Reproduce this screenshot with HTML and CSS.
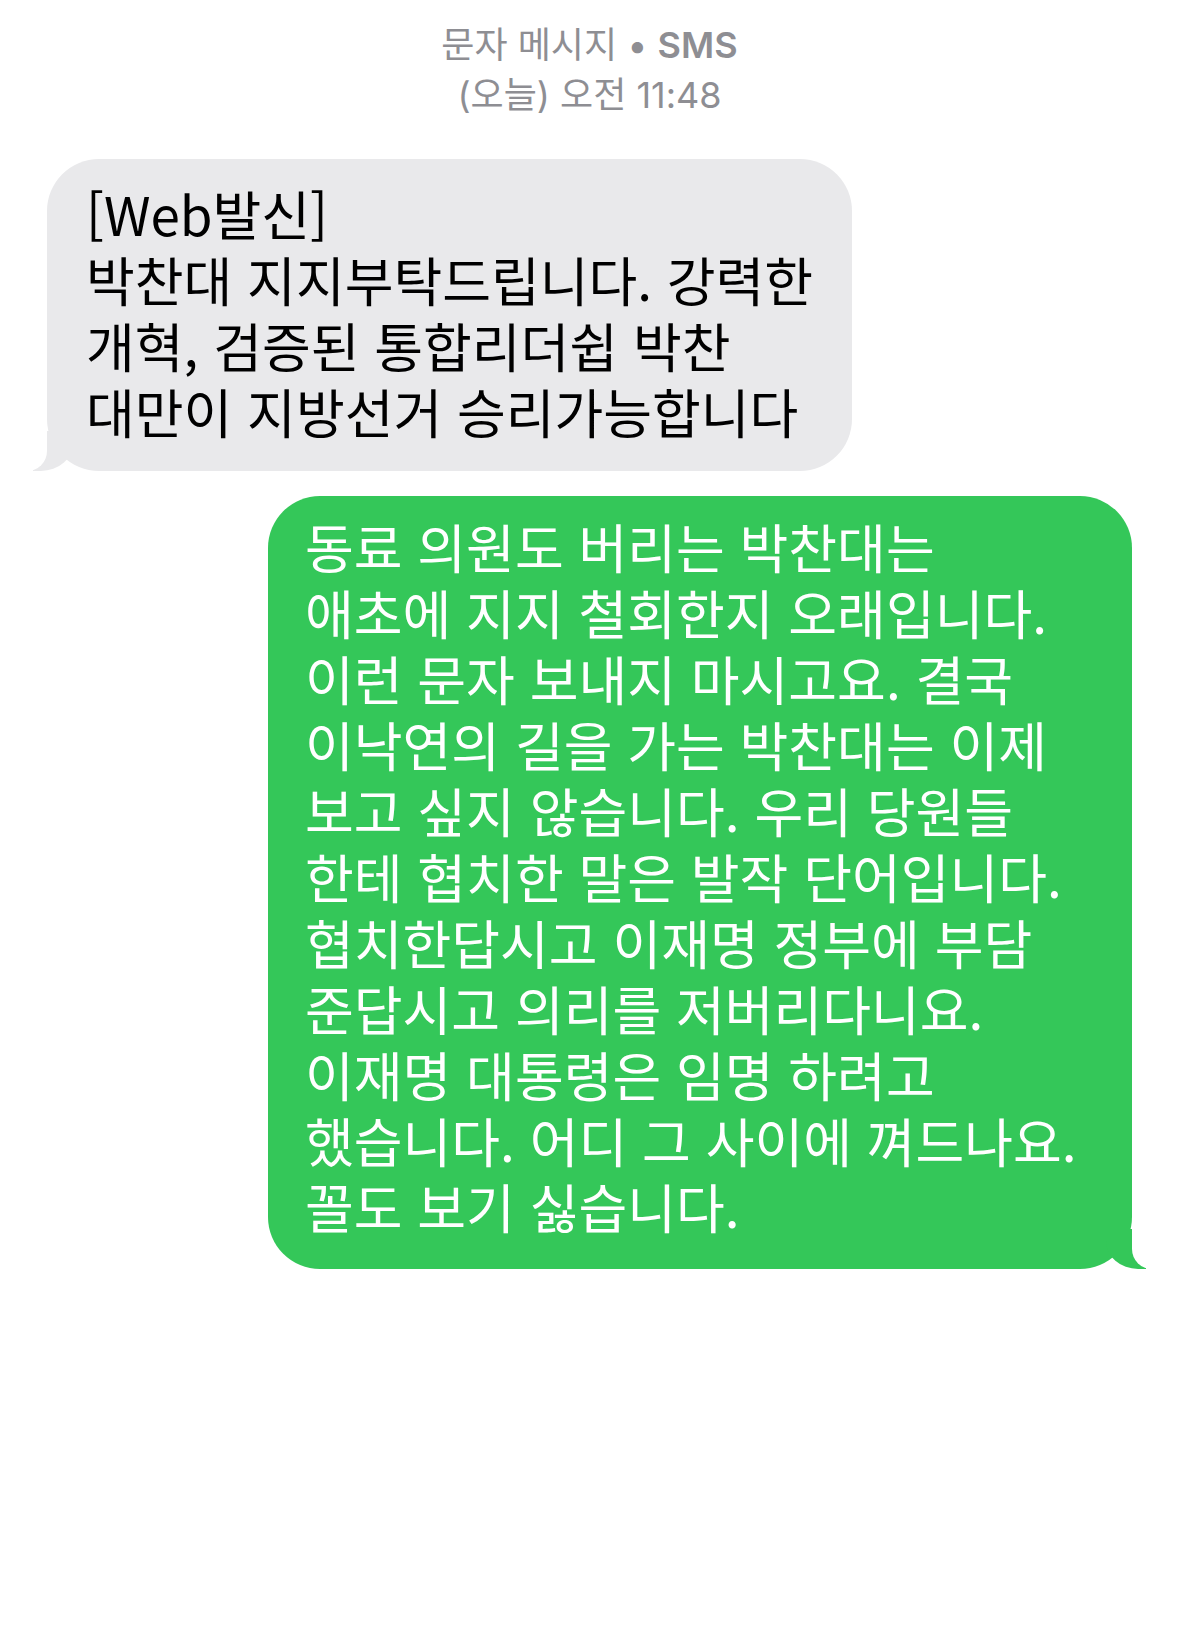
FILE: index.html
```html
<!DOCTYPE html>
<html lang="ko">
<head>
  <meta charset="UTF-8">
  <meta name="viewport" content="width=device-width, initial-scale=1.0">
  <title>문자 메시지</title>
  <link rel="stylesheet" href="styles.css">
</head>
<body>

<!-- Thread header -->
<header class="thread-info">
  <p>문자 메시지 • <span class="service">SMS</span></p>
  <p>(오늘) 오전 11:48</p>
</header>

<!-- Messages -->
<main class="thread">
  <div class="bubble received">
    <p>[Web발신]<br>박찬대 지지부탁드립니다. 강력한<br>개혁, 검증된 통합리더쉽 박찬<br>대만이 지방선거 승리가능합니다</p>
  </div>

  <div class="bubble sent">
    <p>동료 의원도 버리는 박찬대는<br>애초에 지지 철회한지 오래입니다.<br>이런 문자 보내지 마시고요. 결국<br>이낙연의 길을 가는 박찬대는 이제<br>보고 싶지 않습니다. 우리 당원들<br>한테 협치한 말은 발작 단어입니다.<br>협치한답시고 이재명 정부에 부담<br>준답시고 의리를 저버리다니요.<br>이재명 대통령은 임명 하려고<br>했습니다. 어디 그 사이에 껴드나요.<br>꼴도 보기 싫습니다.</p>
  </div>
</main>

</body>
</html>
```

FILE: styles.css
```css
body { margin: 0; background: #fff; font-family: "Noto Sans CJK KR", sans-serif; overflow-x: hidden; }

.thread-info { padding-top: 20px; text-align: center; color: #8e8e93; font-family: Inter, "Noto Sans CJK KR", sans-serif; font-size: 36px; font-weight: 400; line-height: 50px; }
.thread-info p { margin: 0; }
.thread-info .service { font-weight: 600; }

.thread { display: flex; flex-direction: column; padding: 39px 47px 0; gap: 25px; }

.bubble { position: relative; border-radius: 52px; font-size: 53px; line-height: 66px; white-space: nowrap; }
.bubble p { margin: 0; }

.received { align-self: flex-start; width: 805px; box-sizing: border-box; padding: 21px 39px 27px; background: #e9e9eb; color: #000; }
.sent { align-self: flex-end; width: 864px; box-sizing: border-box; padding: 17px 37px 30px; background: #34c759; color: #fff; }

/* tails */
.bubble::before, .bubble::after { content: ""; position: absolute; bottom: 0; height: 40px; }
.received::before { left: -14px; width: 40px; background: #e9e9eb; border-bottom-right-radius: 32px 28px; }
.received::after { left: -52px; width: 52px; background: #fff; border-bottom-right-radius: 20px; }
.sent::before { right: -14px; width: 40px; background: #34c759; border-bottom-left-radius: 32px 28px; }
.sent::after { right: -52px; width: 52px; background: #fff; border-bottom-left-radius: 20px; }
```
